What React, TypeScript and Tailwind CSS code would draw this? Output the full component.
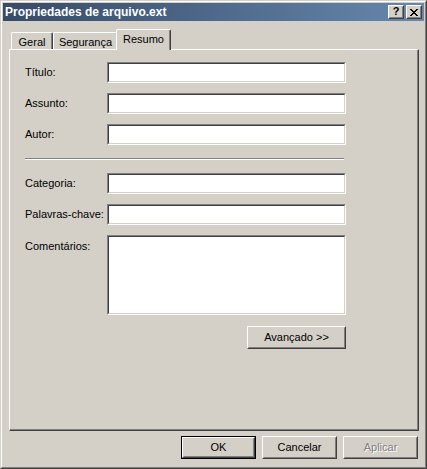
import type { ReactNode } from 'react';

const font = { fontFamily: '"Liberation Sans", Arial, sans-serif' };

function Field({ tall }: { tall?: boolean }) {
  return (
    <div
      className={`w-[239px] ${tall ? 'h-[80px]' : 'h-[21px]'} bg-white border border-t-[#808080] border-l-[#808080] border-r-white border-b-white`}
    >
      <div className="h-full border border-t-[#404040] border-l-[#404040] border-r-[#d4d0c8] border-b-[#d4d0c8]" />
    </div>
  );
}

function Row({ label, tall }: { label: string; tall?: boolean }) {
  return (
    <div className={`flex ${tall ? 'items-start' : 'items-center'}`}>
      <div className={`w-[82px] text-[11px] leading-[13px] text-black ${tall ? 'pt-[5px]' : ''}`}>{label}</div>
      <Field tall={tall} />
    </div>
  );
}

function Button({
  children,
  width,
  isDefault,
  disabled,
}: {
  children: ReactNode;
  width: string;
  isDefault?: boolean;
  disabled?: boolean;
}) {
  const inner = (
    <div className="h-full border border-t-white border-l-white border-r-[#404040] border-b-[#404040]">
      <div className="h-full flex items-center justify-center border border-transparent border-r-[#808080] border-b-[#808080]">
        <span
          className={`text-[11px] leading-[13px] ${disabled ? 'text-[#808080] [text-shadow:1px_1px_0_#ffffff]' : 'text-black'}`}
        >
          {children}
        </span>
      </div>
    </div>
  );
  if (isDefault) {
    return <div className={`${width} h-[23px] border border-black bg-[#d4d0c8]`}>{inner}</div>;
  }
  return <div className={`${width} h-[23px] bg-[#d4d0c8]`}>{inner}</div>;
}

function CaptionButton({ children }: { children: ReactNode }) {
  return (
    <div className="w-[16px] h-[14px] bg-[#d4d0c8] border border-t-white border-l-white border-r-[#404040] border-b-[#404040]">
      <div className="h-full flex items-center justify-center border border-transparent border-r-[#808080] border-b-[#808080]">
        {children}
      </div>
    </div>
  );
}

function Tab({ label, selected, width }: { label: string; selected?: boolean; width: string }) {
  if (selected) {
    return (
      <div
        className={`${width} h-[21px] -mb-px -ml-[2px] relative z-10 bg-[#d4d0c8] rounded-t-[2px] border border-b-0 border-t-white border-l-white border-r-[#404040] shadow-[inset_-1px_0_0_#808080] flex justify-center pt-[3px]`}
      >
        <span className="text-[11px] leading-[13px] text-black">{label}</span>
      </div>
    );
  }
  return (
    <div
      className={`${width} h-[17px] bg-[#d4d0c8] rounded-t-[2px] border border-b-0 border-t-white border-l-white border-r-[#404040] shadow-[inset_-1px_0_0_#808080] flex justify-center pt-[3px]`}
    >
      <span className="text-[11px] leading-[13px] text-black">{label}</span>
    </div>
  );
}

export default function App() {
  return (
    <div style={font} className="w-[427px] h-[469px] bg-[#d4d0c8] select-none">
      <div className="h-full border border-t-[#d4d0c8] border-l-[#d4d0c8] border-r-[#404040] border-b-[#404040]">
        <div className="h-full border border-t-white border-l-white border-r-[#808080] border-b-[#808080] p-px flex flex-col">
          {/* Title bar */}
          <div className="h-[18px] flex items-center justify-between pl-[2px] pr-[2px] bg-gradient-to-r from-[#374b69] to-[#6688ad]">
            <span className="text-white font-bold text-[12px] leading-[14px]">Propriedades de arquivo.ext</span>
            <div className="flex gap-[2px]">
              <CaptionButton>
                <span className="text-black font-bold text-[11px] leading-[11px] -mt-px">?</span>
              </CaptionButton>
              <CaptionButton>
                <svg width="8" height="7" viewBox="0 0 8 7" shapeRendering="crispEdges">
                  <path d="M0 0h2v1h-2zM6 0h2v1h-2zM1 1h2v1h-2zM5 1h2v1h-2zM2 2h4v1h-4zM3 3h2v1h-2zM2 4h4v1h-4zM1 5h2v1h-2zM5 5h2v1h-2zM0 6h2v1h-2zM6 6h2v1h-2z" fill="#000" />
                </svg>
              </CaptionButton>
            </div>
          </div>

          {/* Tabs and panel */}
          <div className="pl-[6px] pt-[8px]">
            <div className="flex items-end h-[20px] pl-[2px]">
              <Tab label="Geral" width="w-[42px]" />
              <Tab label="Segurança" width="w-[65px]" />
              <Tab label="Resumo" width="w-[55px]" selected />
            </div>
            <div className="w-[410px] h-[382px] border border-t-white border-l-white border-r-[#404040] border-b-[#404040] shadow-[inset_-1px_-1px_0_#808080]">
              <div className="pl-[15px] pt-[12px] flex flex-col">
                <div className="flex flex-col gap-[10px]">
                  <Row label="Título:" />
                  <Row label="Assunto:" />
                  <Row label="Autor:" />
                </div>
                <div className="w-[319px] mt-[13px] mb-[13px] border-t border-t-[#808080] border-b border-b-white" />
                <div className="flex flex-col gap-[10px]">
                  <Row label="Categoria:" />
                  <Row label="Palavras-chave:" />
                  <Row label="Comentários:" tall />
                </div>
                <div className="w-[321px] flex justify-end mt-[11px]">
                  <Button width="w-[99px]">Avançado &gt;&gt;</Button>
                </div>
              </div>
            </div>
          </div>

          {/* Bottom buttons */}
          <div className="flex justify-end gap-[6px] pr-[6px] mt-[5px]">
            <Button width="w-[75px]" isDefault>
              OK
            </Button>
            <Button width="w-[75px]">Cancelar</Button>
            <Button width="w-[75px]" disabled>
              Aplicar
            </Button>
          </div>
        </div>
      </div>
    </div>
  );
}
